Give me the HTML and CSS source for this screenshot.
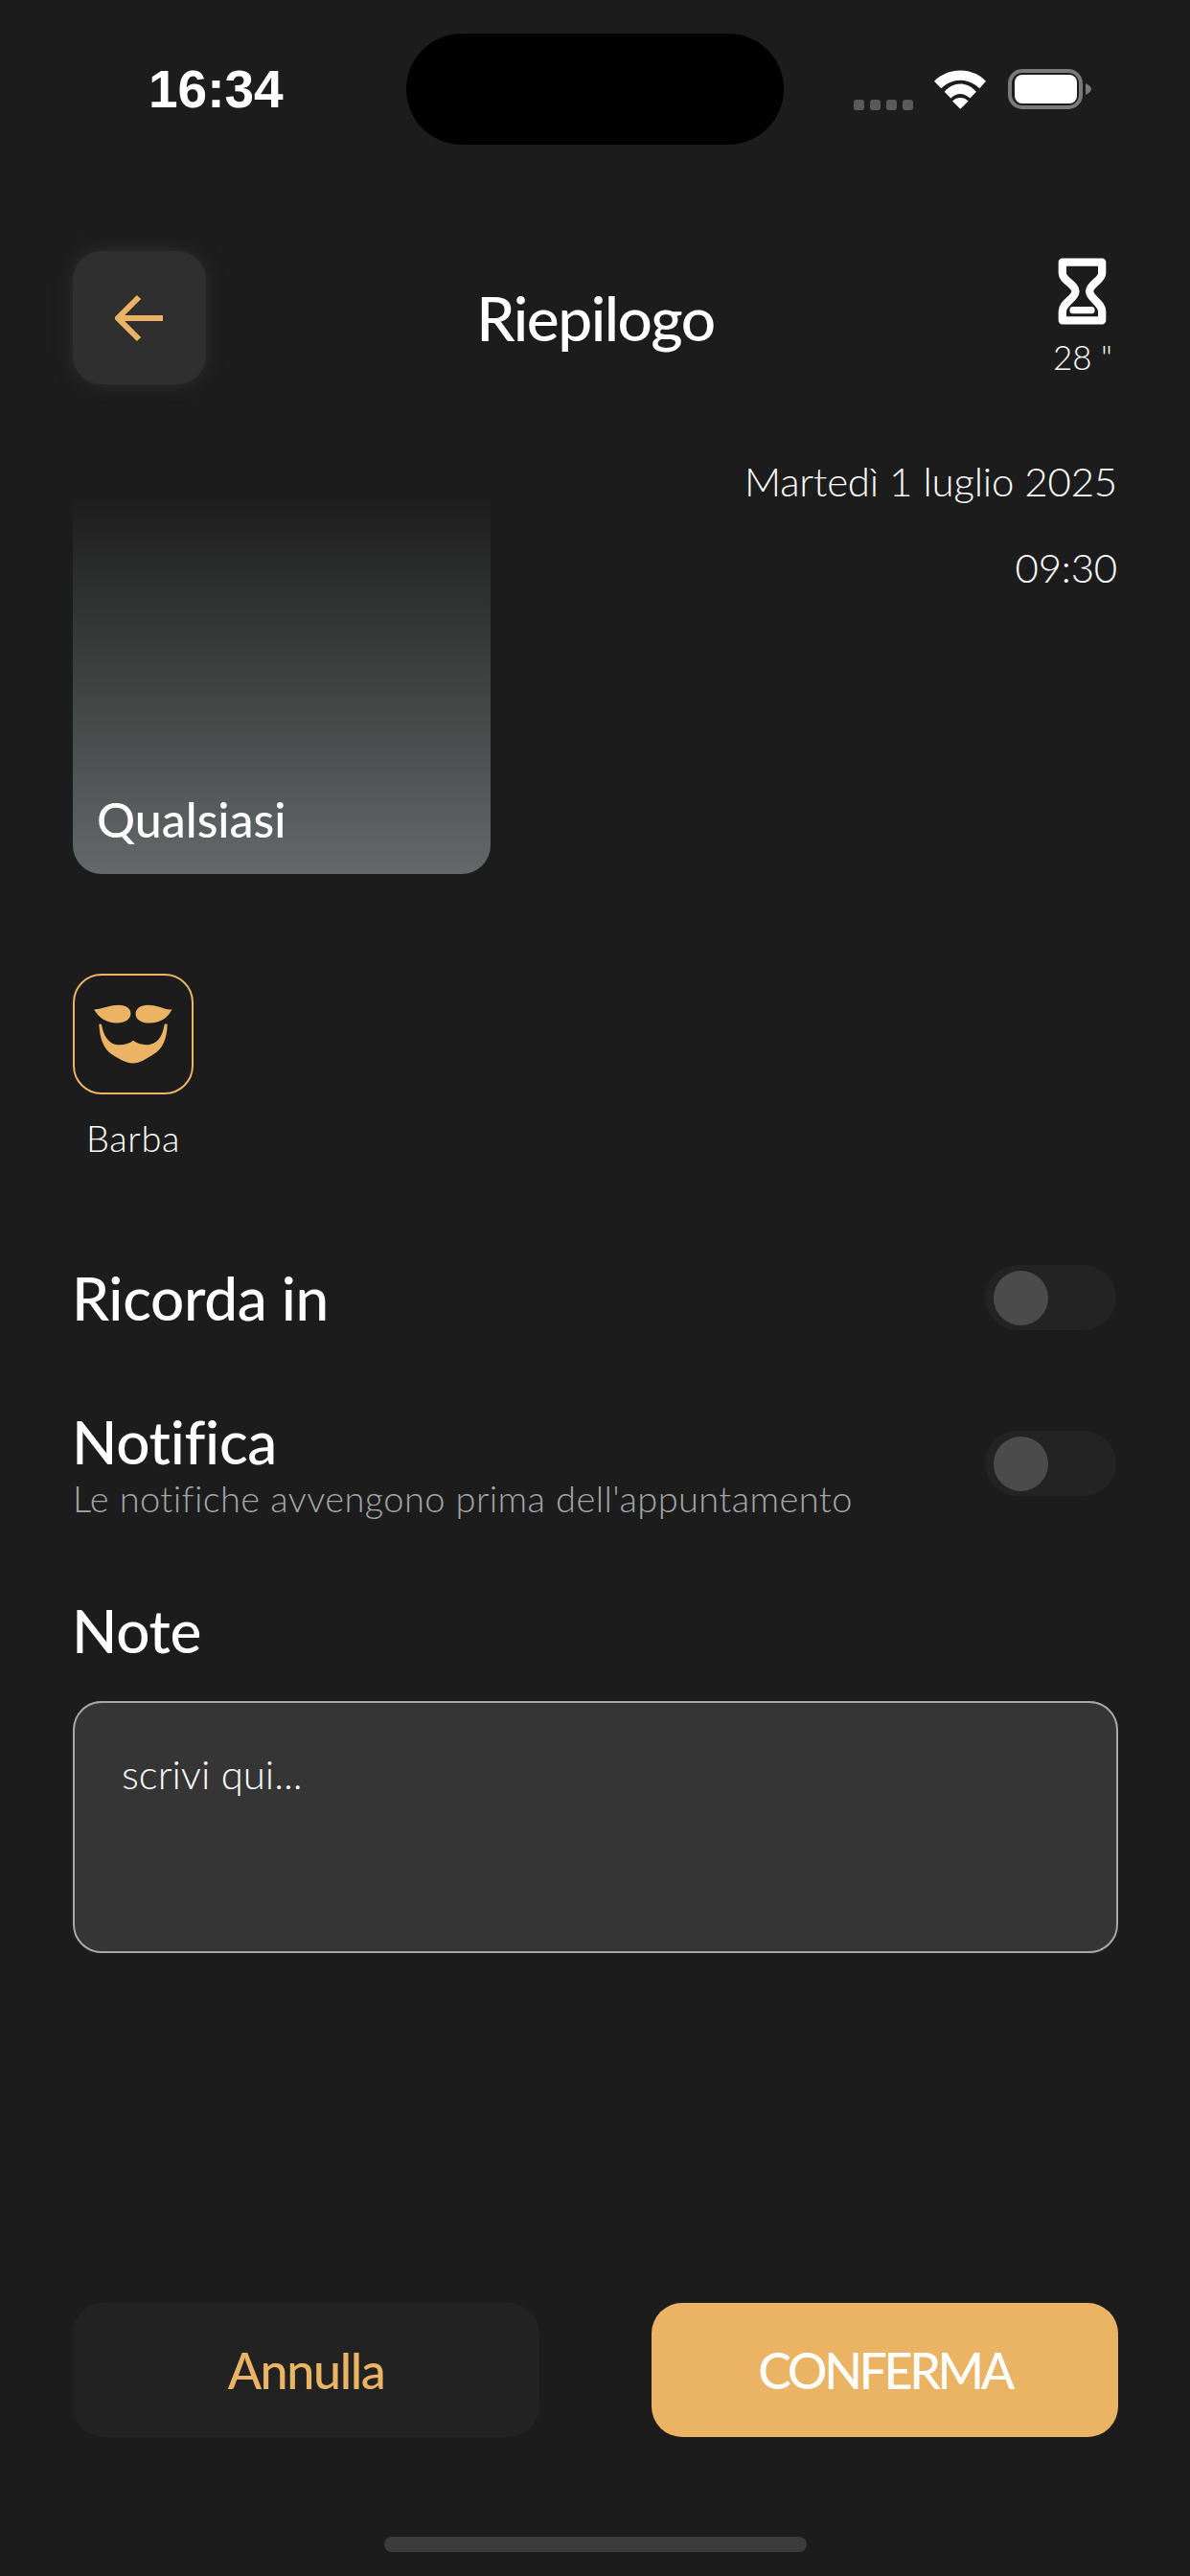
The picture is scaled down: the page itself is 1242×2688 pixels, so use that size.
FILE: index.html
```html
<!DOCTYPE html>
<html lang="it">
<head>
    <meta charset="UTF-8">
    <title>Riepilogo</title>
    <link rel="stylesheet" href="styles.css">
</head>
<body>
<div class="screen">
    <div class="status">
        <div class="time">16:34</div>
        <div class="island"></div>
        <div class="signals">
            <div class="dots"><i></i><i></i><i></i><i></i></div>
            <svg class="wifi" viewBox="375 95 162 122">
                <path d="M375 130C420 85 495 85 537 130L517 152C480 118 432 118 397 152Z"/>
                <path d="M407 163C435 130 478 130 507 163L487 183C468 165 445 165 427 183Z"/>
                <path d="M432 192C447 178 467 178 482 192L457 217Z"/>
            </svg>
            <svg class="battery" viewBox="0 0 87 42">
                <rect x="2" y="2" width="74" height="38" rx="13" fill="none" stroke="#7a7a7a" stroke-width="4"/>
                <rect x="7" y="6" width="65" height="30" rx="8" fill="#fff"/>
                <path d="M81 15C85 17 87 19 87 21C87 23 85 25 81 27Z" fill="#7a7a7a"/>
            </svg>
        </div>
    </div>

    <div class="header">
        <div class="back">
            <svg viewBox="0 0 50 50" width="50" height="50">
                <path d="M2 25H50M25 3L3 25L25 47" fill="none" stroke="#ebb464" stroke-width="6"/>
            </svg>
        </div>
        <div class="title">Riepilogo</div>
        <div class="timer">
            <svg viewBox="133 57 152 210" width="51" height="70">
                <path d="M147 71H271V105C271 128 232 140 232 162C232 185 271 197 271 225V253H147V225C147 197 188 185 188 162C188 140 147 128 147 105Z" fill="none" stroke="#fff" stroke-width="25" stroke-linejoin="round"/>
                <rect x="170" y="210" width="78" height="22" rx="10" fill="#fff"/>
            </svg>
            <span>28 "</span>
        </div>
    </div>

    <div class="summary">
        <div class="card">Qualsiasi</div>
        <div class="when">
            <div>Martedì 1 luglio 2025</div>
            <div>09:30</div>
        </div>
    </div>

    <div class="service">
        <div class="service-icon">
            <svg viewBox="107 107 380 380" width="122" height="122">
                <path d="M170 217C195 218 215 203 250 203C275 203 289 215 289 230C289 250 268 261 245 261C210 261 185 245 170 217Z"/>
                <path d="M423 217C400 220 380 203 345 203C320 203 305 215 305 232C305 250 325 261 350 261C385 261 410 245 423 217Z"/>
                <path d="M186 264L194 265C200 300 215 328 245 332C265 334 285 328 297 318C310 328 330 334 350 331C380 326 393 300 399 264L408 264C407 310 395 345 360 365C340 378 318 392 297 392C275 392 250 378 230 365C200 345 188 310 186 264Z"/>
            </svg>
        </div>
        <div class="service-name">Barba</div>
    </div>

    <div class="option option-remind">
        <div class="heading">Ricorda in</div>
        <div class="toggle"><i></i></div>
    </div>

    <div class="option option-notify">
        <div>
            <div class="heading">Notifica</div>
            <div class="hint">Le notifiche avvengono prima dell'appuntamento</div>
        </div>
        <div class="toggle"><i></i></div>
    </div>

    <div class="heading note-title">Note</div>
    <div class="note">scrivi qui...</div>

    <div class="actions">
        <div class="btn btn-cancel">Annulla</div>
        <div class="btn btn-ok">CONFERMA</div>
    </div>
    <div class="home"></div>
</div>
</body>
</html>
```

FILE: styles.css
```css
*{ margin:0; padding:0; box-sizing:border-box;}
body{
    background:#1c1c1c;
    color:#fff;
    font-family:"Lato","Liberation Sans",sans-serif;
}
.screen{
    width:1242px;
    height:2688px;
    padding:0 75px 25px 76px;
    display:flex;
    flex-direction:column;
    overflow:hidden;
}

/* status bar */
.status{
    display:flex;
    height:262px;
    padding-top:35px;
}
.time{
    width:269px;
    height:116px;
    margin-left:79px;
    line-height:116px;
    font-family:"Liberation Sans",sans-serif;
    font-size:55px;
    font-weight:bold;
}
.island{
    width:394px;
    height:116px;
    background:#000;
    border-radius:58px;
}
.signals{
    display:flex;
    height:116px;
    margin-left:73px;
    align-items:center;
}
.dots{
    display:flex;
    gap:6px;
    margin-top:33px;
}
.dots i{
    width:11px;
    height:11px;
    background:#5a5a5a;
    border-radius:3px;
}
.wifi{
    width:54px;
    height:41px;
    margin-left:22px;
    fill:#fff;
}
.battery{
    width:87px;
    height:42px;
    margin-left:23px;
}

/* header */
.header{
    display:grid;
    grid-template-columns:1fr auto 1fr;
    grid-template-rows:139px;
    height:139px;
    align-items:center;
}
.back{
    width:139px;
    height:139px;
    background:#2f2f2f;
    border-radius:30px;
    box-shadow:0 0 18px rgba(50,50,50,.9);
    display:flex;
    align-items:center;
    justify-content:center;
    padding-right:1px;
}
.title{
    font-size:64px;
    font-weight:500;
    line-height:139px;
    letter-spacing:-1.5px;
}
.timer{
    justify-self:end;
    align-self:start;
    margin-right:6px;
    padding-top:7px;
    font-size:35px;
    font-weight:300;
    line-height:44px;
    white-space:nowrap;
    display:flex;
    flex-direction:column;
    align-items:center;
    gap:11px;
}

/* pic + date */
.summary{
    display:flex;
    justify-content:space-between;
    margin-top:75px;
}
.card{
    width:436px;
    height:436px;
    padding:0 0 27px 25px;
    display:flex;
    align-items:flex-end;
    border-radius:0 0 30px 30px;
    background:linear-gradient(#1c1c1c 9%,#646868);
    font-size:50px;
    font-weight:500;
}
.when{
    padding:5px 1px 0 0;
    text-align:right;
    font-size:42px;
    font-weight:300;
    line-height:42px;
    letter-spacing:-.2px;
}
.when div{
    margin-bottom:48px;
}

/* service */
.service{
    width:126px;
    margin-top:104px;
}
.service-icon{
    width:126px;
    height:126px;
    border:2px solid #ebb464;
    border-radius:30px;
    fill:#ebb464;
}
.service-name{
    margin-top:23px;
    text-align:center;
    font-size:38px;
    font-weight:300;
    line-height:44px;
    letter-spacing:.6px;
    white-space:nowrap;
}

/* options */
.option{
    display:flex;
    justify-content:space-between;
    align-items:center;
    padding-right:2px;
}
.option-remind{
    margin-top:109px;
}
.option-notify{
    margin-top:78px;
}
.heading{
    margin-left:-1px;
    font-size:62px;
    font-weight:500;
    line-height:72px;
    letter-spacing:-.3px;
}
.hint{
    margin-top:1px;
    font-size:38px;
    font-weight:300;
    line-height:44px;
    letter-spacing:.4px;
    color:#a3a7a7;
}
.toggle{
    width:137px;
    height:68px;
    padding:6px 9px;
    background:#232323;
    border-radius:34px;
}
.toggle i{
    display:block;
    width:57px;
    height:57px;
    background:#4b4b4b;
    border-radius:50%;
}

/* note */
.note-title{
    margin-top:80px;
}
.note{
    height:263px;
    margin-top:38px;
    padding:50px 49px;
    background:#353535;
    border:2px solid #a8a8a8;
    border-radius:30px;
    font-size:42px;
    font-weight:300;
    line-height:48px;
}

/* bottom */
.actions{
    display:flex;
    justify-content:space-between;
    margin-top:auto;
}
.btn{
    width:487px;
    height:140px;
    border-radius:32px;
    text-align:center;
    line-height:140px;
    font-size:52px;
    font-weight:500;
}
.btn-cancel{
    background:#222;
    color:#ebb464;
    letter-spacing:-1.4px;
}
.btn-ok{
    background:#ebb464;
    letter-spacing:-3.4px;
}
.home{
    width:441px;
    height:16px;
    margin:104px 0 0 325px;
    background:#3b3b3b;
    border-radius:8px;
}
```
